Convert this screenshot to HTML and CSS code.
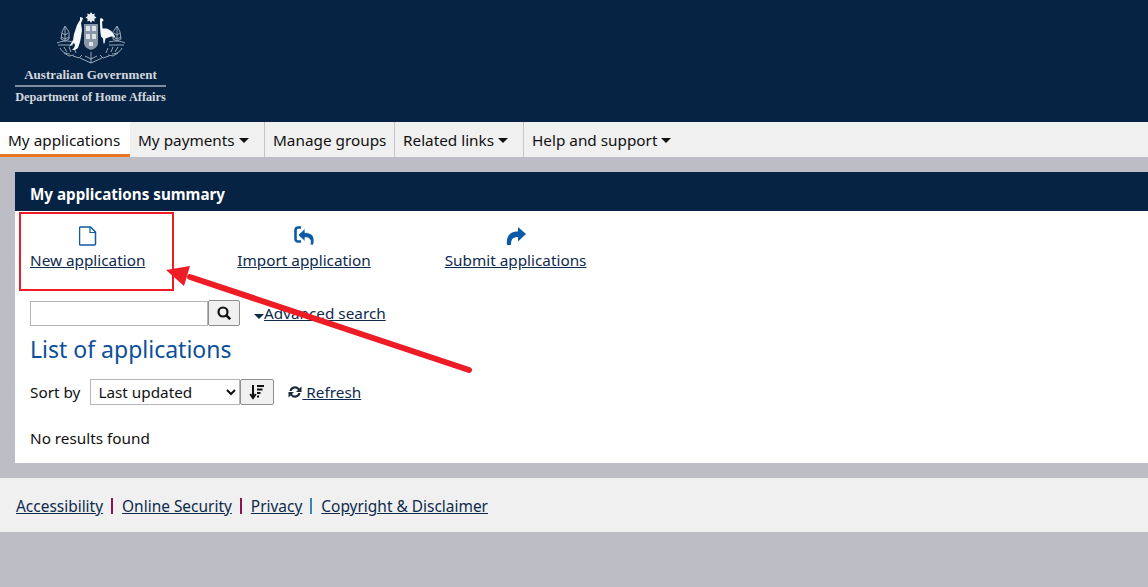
FILE: index.html
```html
<!DOCTYPE html>
<html lang="en">
<head>
<meta charset="utf-8">
<title>My applications</title>
<link rel="stylesheet" href="styles.css">
</head>
<body>
<header class="masthead">
  <div class="brand">
    <svg class="crest" viewBox="0 0 70 52" width="70" height="52" aria-hidden="true">
      <g fill="none" stroke="#a9b5c3" stroke-width="0.900">
        <path d="M1 31c6-2.500 11-2.500 16-1M53 30c6-1.500 11-1.500 16 1M2 33h15M53 33h15"/>
        <path d="M4 36c2 4 6 6 10 6M8 35l3 5M13 35l2 5M18 36l2 5M66 36c-2 4-6 6-10 6M62 35l-3 5M57 35l-2 5M52 36l-2 5"/>
        <path d="M8 41l5 3 5-1M62 41l-5 3-5-1M17 44l6 2 3-3M53 44l-6 2-3-3M24 46l11 5 11-5M35 40v11M29 44l6 3 6-3"/>
        <path d="M9 14l-3 6-1 7 4 2 4-2 0-7zM9 15v13M6 21l3 2 3-2M5 25l4 2 4-2"/>
        <path d="M61 14l3 6 1 7-4 2-4-2 0-7zM61 15v13M64 21l-3 2-3-2M65 25l-4 2-4-2"/>
      </g>
      <path d="M28 12h14v19q0 5-7 7-7-2-7-7z" fill="#8896a8"/>
      <path d="M30 14h4v5h-4zM36 14h4v5h-4zM30 22h4v5h-4zM36 22h4v5h-4zM33 30h4v4h-4z" fill="#dfe4ea"/>
      <path d="M35 0l1.400 2.200 2.400-.6-.5 2.400 2.200 1.500-2.200 1.500.5 2.400-2.400-.6L35 11l-1.400-2.200-2.400.6.5-2.400-2.200-1.500 2.200-1.500-.5-2.400 2.400.6z" fill="#e9ecf0"/>
      <path d="M24 5l3 1-1 3-1 2 1 7-1 7-1 5-2 6-3 2h-3l2-2 1-3-1-2-5 4 4-7 1-6 3-9 3-5z" fill="#f6f7f9"/>
      <path d="M44 7l1-1 2 1 .5 2-1.500.5.500 7 4 0c4 1 7 4 9 9-3-1.500-5-1.500-7 0l-3 1-1 5h-1l-.5-5-2-2c-1-5-1-12-1-18z" fill="#f6f7f9"/>
    </svg>
    <div class="brand-line brand-gov">Australian Government</div>
    <div class="brand-line brand-dept">Department of Home Affairs</div>
  </div>
</header>
<nav class="tabs">
  <a class="tab tab-active">My applications</a>
  <a class="tab tab-payments">My payments<span class="caret"></span></a>
  <a class="tab tab-groups">Manage groups</a>
  <a class="tab tab-related">Related links<span class="caret"></span></a>
  <a class="tab">Help and support<span class="caret"></span></a>
</nav>
<main class="panel">
  <h1 class="panel-title">My applications summary</h1>
  <div class="panel-body">
    <div class="actions">
      <div class="action action-new">
        <svg class="action-icon" viewBox="0 0 18 20" width="18" height="20" aria-hidden="true"><path d="M1.500 1h10l5 5v12a1 1 0 0 1-1 1h-14a1 1 0 0 1-1-1V2a1 1 0 0 1 1-1z" fill="#fff" stroke="#0b5aa5" stroke-width="1.500"/><path d="M11 1.500V6.500h5" fill="none" stroke="#0b5aa5" stroke-width="1.200"/></svg>
        <a class="link" href="#">New application</a>
      </div>
      <div class="action action-import">
        <svg class="action-icon" viewBox="0 0 20 20" width="20" height="20" aria-hidden="true"><path d="M7 1.500H4a2.500 2.500 0 0 0-2.500 2.500v9A2.500 2.500 0 0 0 4 15.500h3" fill="none" stroke="#0b5aa5" stroke-width="2.600"/><path d="M11 2.500L4 9l7 6.500v-4c3 0 5 1 5.500 3.500 0 1.500-.1 3-.5 4h3.500c.5-1.500.5-3.500.5-5C20 9 16 6.500 11 6.500z" fill="#0b5aa5" stroke="#fff" stroke-width="0.800"/></svg>
        <a class="link" href="#">Import application</a>
      </div>
      <div class="action">
        <svg class="action-icon" viewBox="0 0 20 20" width="20" height="20" aria-hidden="true"><path d="M12 1l8 7-8 7.500V11C7 11 5 13 5 19H1C0 11 3 5.500 12 5.500z" fill="#0b5aa5"/></svg>
        <a class="link" href="#">Submit applications</a>
      </div>
    </div>
    <div class="search-row">
      <input class="search-input" type="text" aria-label="Search">
      <button class="icon-btn search-btn" aria-label="Search">
        <svg viewBox="0 0 14 14" width="14" height="14" aria-hidden="true"><circle cx="6" cy="6" r="4.500" fill="none" stroke="#111" stroke-width="2.200"/><path d="M9 9l4.200 4.200" stroke="#111" stroke-width="2.600"/></svg>
      </button>
      <span class="adv-caret"></span><a class="link" href="#">Advanced search</a>
    </div>
    <h2 class="list-title">List of applications</h2>
    <div class="sort-row">
      <label class="sort-label" for="sort">Sort by</label>
      <select class="sort-select" id="sort"><option>Last updated</option></select>
      <button class="icon-btn sort-btn" aria-label="Sort order">
        <svg viewBox="0 0 16 16" width="16" height="16" aria-hidden="true"><path d="M4 1v12M1.200 10L4 14l2.800-4" fill="none" stroke="#111" stroke-width="2"/><path d="M8 2h7M8 5.500h5.500M8 9h3.500M8 12.500h2" stroke="#111" stroke-width="2"/></svg>
      </button>
      <a class="link refresh" href="#">
        <svg viewBox="0 0 14 14" width="14" height="14" aria-hidden="true"><path d="M1.500 6A5.500 5.500 0 0 1 11.300 3.500L13.500 1.500V7H8l2-2A3.500 3.500 0 0 0 3.700 6zM12.500 8A5.500 5.500 0 0 1 2.700 10.500L.5 12.500V7H6L4 9a3.500 3.500 0 0 0 6.300-1z" fill="#1c2a3a"/></svg>
        <span> Refresh</span>
      </a>
    </div>
    <p class="no-results">No results found</p>
  </div>
</main>
<footer class="footer">
  <a class="link" href="#">Accessibility</a><span class="sep sep-a"></span>
  <a class="link" href="#">Online Security</a><span class="sep sep-a"></span>
  <a class="link" href="#">Privacy</a><span class="sep sep-b"></span>
  <a class="link" href="#">Copyright &amp; Disclaimer</a>
</footer>
<div class="callout-box"></div>
<svg class="callout-arrow" viewBox="0 0 1148 587" width="1148" height="587" aria-hidden="true">
  <path d="M469 370L190 277" stroke="#ee1c25" stroke-width="6" stroke-linecap="round"/>
  <path d="M166 270L190 266L184 286z" fill="#ee1c25"/>
</svg>
</body>
</html>
```
FILE: styles.css
```css
* { box-sizing: border-box; }
html, body { margin: 0; height: 100%; }
body {
  position: relative;
  min-height: 587px;
  overflow: hidden;
  background: #bdbdc6;
  color: #111;
  font-family: "Noto Sans", "Open Sans", sans-serif;
  font-size: 15.300px;
  line-height: 22px;
}
.masthead { height: 122px; background: #072344; padding: 12px 0 0 15px; }
.brand { width: 151px; display: flex; flex-direction: column; align-items: center; }
.crest { display: block; margin: 0 0 4px 0; }
.brand-line {
  font-family: "Liberation Serif", serif;
  font-weight: 700;
  line-height: 14px;
  color: #d3d8de;
  white-space: nowrap;
}
.brand-gov {
  width: 100%;
  padding-bottom: 3px;
  border-bottom: 2px solid #7d8ea3;
  margin-bottom: 3px;
  font-size: 13px;
  text-align: center;
}
.brand-dept { font-size: 12.300px; }
.tabs { display: flex; height: 35px; background: #f0f0f0; }
.tab {
  display: flex;
  align-items: center;
  padding: 1px 8px 0;
  border-right: 1px solid #c4c4c8;
  color: #111;
  white-space: nowrap;
}
.tab:last-child { border-right: 0; }
.tab-active {
  width: 130px;
  padding-top: 3px;
  background: #fff;
  border-right: 0;
  border-bottom: 3px solid #e87722;
}
.tab-payments { width: 135px; }
.tab-groups { width: 130px; }
.tab-related { width: 129px; }
.caret {
  display: inline-block;
  margin-left: 4px;
  border-top: 5px solid #111;
  border-left: 5px solid transparent;
  border-right: 5px solid transparent;
}
.panel { margin: 15px 0 15px 15px; background: #fff; height: 291px; }
.panel-title {
  margin: 0;
  height: 39px;
  padding: 10px 15px 0;
  background: #072344;
  color: #fff;
  font-size: 15.200px;
  font-weight: 700;
  line-height: 24px;
}
.panel-body { padding: 15px 15px 0; }
.actions { display: flex; height: 75px; margin-bottom: -1px; }
.action { display: flex; flex-direction: column; align-items: center; }
.action-icon { display: block; margin-bottom: 3px; }
.action-new { margin-right: 92px; }
.action-import { margin-right: 74px; }
.link { color: #0e2a4d; text-decoration: underline; white-space: nowrap; }
.search-row { display: flex; align-items: center; height: 26px; }
.search-input { width: 178px; height: 25px; border: 1px solid #b5b5bb; background: #fff; padding: 0; }
.icon-btn {
  display: flex;
  align-items: center;
  justify-content: center;
  height: 26px;
  padding: 0;
  background: #f0f0f0;
  border: 1px solid #8f8f8f;
  border-radius: 2px;
}
.search-btn { width: 32px; }
.adv-caret {
  margin: 6px 0 0 14px;
  border-top: 5px solid #0e2a4d;
  border-left: 5px solid transparent;
  border-right: 5px solid transparent;
}
.list-title {
  margin: 6px 0 12px;
  color: #0b4f9a;
  font-size: 23px;
  font-weight: 400;
  line-height: 34px;
}
.sort-row { display: flex; align-items: center; height: 27px; }
.sort-label { margin-right: 10px; }
.sort-select {
  width: 150px;
  height: 26px;
  padding: 0 0 0 3px;
  border: 1px solid #b5b5bb;
  background: #fff;
  color: #111;
  font: inherit;
}
.sort-btn { width: 34px; }
.refresh { display: flex; align-items: center; margin-left: 14px; }
.refresh span { white-space: pre; }
.no-results { margin: 22px 0 0; }
.footer {
  display: flex;
  align-items: center;
  height: 54px;
  padding: 2px 0 0 16px;
  background: #f0f0f0;
  font-size: 15.450px;
}
.sep { width: 2px; height: 16px; margin: 0 9px 0 8px; }
.sep-a { background: #8c1150; }
.sep-b { background: #3b84b8; }
.callout-box {
  position: absolute;
  left: 19px;
  top: 212px;
  width: 155px;
  height: 79px;
  border: 2px solid #ee1c25;
}
.callout-arrow { position: absolute; left: 0; top: 0; pointer-events: none; }
```
